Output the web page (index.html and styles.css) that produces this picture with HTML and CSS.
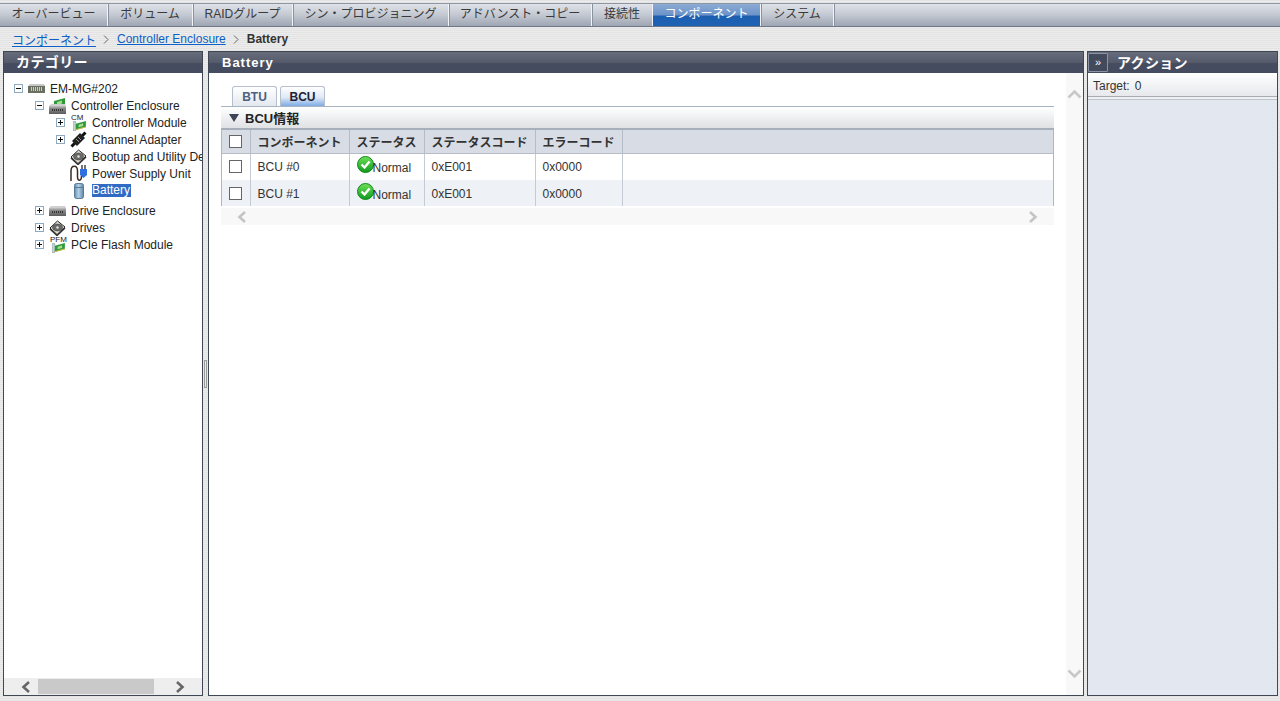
FILE: index.html
```html
<!DOCTYPE html>
<html lang="ja">
<head>
<meta charset="utf-8">
<title>Battery</title>
<link rel="stylesheet" href="styles.css">
</head>
<body>
<svg class="defs" width="0" height="0" aria-hidden="true">
  <defs>
    <linearGradient id="g-green" x1="0" y1="0" x2="0" y2="1"><stop offset="0" stop-color="#6fe05a"/><stop offset="1" stop-color="#0c9a1c"/></linearGradient>
    <linearGradient id="g-bat" x1="0" y1="0" x2="1" y2="0"><stop offset="0" stop-color="#5d8fb5"/><stop offset=".45" stop-color="#b4d0e4"/><stop offset="1" stop-color="#5d86a8"/></linearGradient>
    <linearGradient id="g-box" x1="0" y1="0" x2="0" y2="1"><stop offset="0" stop-color="#c4c4c4"/><stop offset=".3" stop-color="#8a8a8a"/><stop offset="1" stop-color="#5c5c5c"/></linearGradient>
    <symbol id="i-plus" viewBox="0 0 9 9"><rect x=".5" y=".5" width="8" height="8" fill="#fff" stroke="#8fa9c0"/><path d="M2 4.500h5M4.500 2v5" stroke="#111"/></symbol>
    <symbol id="i-minus" viewBox="0 0 9 9"><rect x=".5" y=".5" width="8" height="8" fill="#fff" stroke="#8fa9c0"/><path d="M2 4.500h5" stroke="#111"/></symbol>
    <symbol id="i-board" viewBox="0 0 14 11"><rect x="0" y="0" width="3" height="11" fill="#c5d2d2" stroke="#8a9a9a" stroke-width=".5"/><path d="M3 3l11-3v7L3 10z" fill="#2e9a3c"/><path d="M6 4l5-1.500v3L6 7z" fill="#a5dc8e"/><path d="M3 9.500l11-3" stroke="#e0c040"/></symbol>
    <symbol id="i-disk" viewBox="0 0 17 16"><path d="M1 9l7 6.500L16 8" fill="none" stroke="#333" stroke-width="1.500"/><path d="M8.500 1L16 7l-8 7.500L1 8z" fill="#e6e4d6" stroke="#222"/><ellipse cx="8.500" cy="7.500" rx="5" ry="3.500" fill="#6a6a6a" stroke="#222" stroke-width=".5"/><circle cx="8.500" cy="7.500" r="1.200" fill="#e4e4e4"/></symbol>
    <symbol id="i-enc" viewBox="0 0 17 10"><path d="M2 0h14l1 2H0z" fill="#cfcfcf"/><rect x="0" y="2" width="17" height="8" fill="url(#g-box)"/><path d="M3 6h11" stroke="#333" stroke-width="2" stroke-dasharray="1 1"/></symbol>
  </defs>
</svg>

<nav class="menu">
  <a class="menu-item m1">オーバービュー</a>
  <a class="menu-item m2">ボリューム</a>
  <a class="menu-item m3">RAIDグループ</a>
  <a class="menu-item m4">シン・プロビジョニング</a>
  <a class="menu-item m5">アドバンスト・コピー</a>
  <a class="menu-item m6">接続性</a>
  <a class="menu-item m7 active">コンポーネント</a>
  <a class="menu-item m8">システム</a>
</nav>

<div class="crumbs">
  <a href="#">コンポーネント</a>
  <svg class="crumb-sep" width="6" height="9" viewBox="0 0 6 9"><path d="M1 .5l4 4-4 4" fill="none" stroke="#666"/></svg>
  <a href="#">Controller Enclosure</a>
  <svg class="crumb-sep" width="6" height="9" viewBox="0 0 6 9"><path d="M1 .5l4 4-4 4" fill="none" stroke="#666"/></svg>
  <b>Battery</b>
</div>

<div class="workspace">
  <aside class="panel left">
    <h2 class="panel-title">カテゴリー</h2>
    <div class="tree">
      <div class="node l0"><svg class="tog"><use href="#i-minus"/></svg><span class="ico">
        <svg width="17" height="9"><path d="M2 0h14l1 2H0z" fill="#c8c8c8"/><rect y="2" width="17" height="7" fill="#6a7060"/><path d="M3 5h11" stroke="#b8e090" stroke-width="4" stroke-dasharray="1 1"/></svg></span><span class="lbl">EM-MG#202</span></div>
      <div class="node l1"><svg class="tog"><use href="#i-minus"/></svg><span class="ico">
        <svg width="17" height="16"><path d="M5 3l11-3v7L5 10z" fill="#2e9a3c"/><path d="M8 4l5-1.500v3L8 7z" fill="#a5dc8e"/><use href="#i-enc" y="6" width="17" height="10"/></svg></span><span class="lbl">Controller Enclosure</span></div>
      <div class="node l2"><svg class="tog"><use href="#i-plus"/></svg><span class="ico ico-tall">
        <svg class="sub" width="13" height="10"><use href="#i-board" width="13" height="10"/></svg><span class="tiny">CM</span></span><span class="lbl">Controller Module</span></div>
      <div class="node l2"><svg class="tog"><use href="#i-plus"/></svg><span class="ico">
        <svg width="17" height="17" viewBox="0 0 17 17"><path d="M1.500 15.500L5 12M12 5l3.500-3.500" stroke="#111" stroke-width="3"/><path d="M4.500 12.500L12.500 4.500" stroke="#222" stroke-width="7"/><path d="M6 8l3 3M8 6l3 3" stroke="#999"/></svg></span><span class="lbl">Channel Adapter</span></div>
      <div class="node l2 noTog"><span class="ico"><svg width="17" height="16"><use href="#i-disk" width="17" height="16"/></svg></span><span class="lbl">Bootup and Utility Device</span></div>
      <div class="node l2 noTog"><span class="ico">
        <svg width="18" height="17" viewBox="0 0 18 17"><path d="M1 16V6c0-6.500 6.500-6.500 6.500 0v6c0 4.500 4 4.500 4-1" fill="none" stroke="#3a2a22" stroke-width="1.500"/><path d="M10 4h7v6l-3.500 3L10 10z" fill="#2f6fe0"/><path d="M12 0v4M15 0v4" stroke="#444" stroke-width="1.500"/></svg></span><span class="lbl">Power Supply Unit</span></div>
      <div class="node l2 noTog"><span class="ico">
        <svg width="12" height="16" viewBox="0 0 12 16"><rect x="1.500" y=".5" width="9" height="15" rx="2" fill="url(#g-bat)" stroke="#5b7a94"/><path d="M1.500 4.500h9" stroke="#5b7a94"/></svg></span><span class="lbl sel">Battery</span></div>
      <div class="node l1 after-gap"><svg class="tog"><use href="#i-plus"/></svg><span class="ico">
        <svg width="17" height="10"><use href="#i-enc" width="17" height="10"/></svg></span><span class="lbl">Drive Enclosure</span></div>
      <div class="node l1"><svg class="tog"><use href="#i-plus"/></svg><span class="ico"><svg width="17" height="16"><use href="#i-disk" width="17" height="16"/></svg></span><span class="lbl">Drives</span></div>
      <div class="node l1"><svg class="tog"><use href="#i-plus"/></svg><span class="ico ico-tall">
        <svg class="sub" width="13" height="10"><use href="#i-board" width="13" height="10"/></svg><span class="tiny">PFM</span></span><span class="lbl">PCIe Flash Module</span></div>
    </div>
    <div class="hscroll">
      <svg width="12" height="12" viewBox="0 0 12 12"><path d="M9 1L3.500 6 9 11" fill="none" stroke="#666" stroke-width="2.600"/></svg>
      <div class="thumb"></div>
      <svg class="next" width="12" height="12" viewBox="0 0 12 12"><path d="M3 1l5.500 5L3 11" fill="none" stroke="#666" stroke-width="2.600"/></svg>
    </div>
  </aside>

  <div class="splitter"><span class="grip"></span></div>

  <main class="panel center">
    <h2 class="panel-title en">Battery</h2>
    <div class="center-body">
      <div class="content">
        <div class="tabs">
          <span class="tab">BTU</span>
          <span class="tab on">BCU</span>
        </div>
        <div class="section"><span class="tri"></span>BCU情報</div>
        <div class="table-wrap">
          <table>
            <thead>
              <tr>
                <th class="c0"><span class="check"></span></th>
                <th class="c1">コンポーネント</th>
                <th class="c2">ステータス</th>
                <th class="c3">ステータスコード</th>
                <th class="c4">エラーコード</th>
                <th></th>
              </tr>
            </thead>
            <tbody>
              <tr>
                <td class="c0"><span class="check"></span></td>
                <td>BCU #0</td>
                <td class="st"><svg class="ok" width="17" height="17" viewBox="0 0 17 17"><circle cx="8.500" cy="8.500" r="8" fill="url(#g-green)" stroke="#0d8a18"/><path d="M4.500 8.500l3 3 5-6" fill="none" stroke="#fff" stroke-width="2.400"/></svg>Normal</td>
                <td>0xE001</td>
                <td>0x0000</td>
                <td></td>
              </tr>
              <tr class="alt">
                <td class="c0"><span class="check"></span></td>
                <td>BCU #1</td>
                <td class="st"><svg class="ok" width="17" height="17" viewBox="0 0 17 17"><circle cx="8.500" cy="8.500" r="8" fill="url(#g-green)" stroke="#0d8a18"/><path d="M4.500 8.500l3 3 5-6" fill="none" stroke="#fff" stroke-width="2.400"/></svg>Normal</td>
                <td>0xE001</td>
                <td>0x0000</td>
                <td></td>
              </tr>
            </tbody>
          </table>
        </div>
        <div class="table-scroll">
          <svg width="12" height="12" viewBox="0 0 12 12"><path d="M9 1L3.500 6 9 11" fill="none" stroke="#c4c4c4" stroke-width="2.600"/></svg>
          <svg width="12" height="12" viewBox="0 0 12 12"><path d="M3 1l5.500 5L3 11" fill="none" stroke="#c4c4c4" stroke-width="2.600"/></svg>
        </div>
      </div>
      <div class="vscroll">
        <svg width="15" height="12" viewBox="0 0 15 12"><path d="M1.500 9.500l6-6 6 6" fill="none" stroke="#c8c8c8" stroke-width="2.600"/></svg>
        <svg width="15" height="12" viewBox="0 0 15 12"><path d="M1.500 2.500l6 6 6-6" fill="none" stroke="#c8c8c8" stroke-width="2.600"/></svg>
      </div>
    </div>
  </main>

  <aside class="panel right">
    <h2 class="panel-title action"><span class="collapse">»</span>アクション</h2>
    <div class="target"><span>Target:</span><span>0</span></div>
    <div class="rule"></div>
    <div class="right-body"></div>
  </aside>
</div>
</body>
</html>
```

FILE: styles.css
```css
html, body { margin: 0; height: 100%; }
body {
  width: 1280px;
  height: 701px;
  overflow: hidden;
  display: flex;
  flex-direction: column;
  font-family: "Liberation Sans", "Noto Sans CJK JP", sans-serif;
  font-size: 12px;
  color: #333;
  background: repeating-linear-gradient(to bottom, #e3e3e3 0, #e3e3e3 1px, #ececec 1px, #ececec 2px);
}
.defs { position: absolute; }

/* top menu */
.menu {
  height: 22px;
  margin-top: 3px;
  display: flex;
  flex: none;
  border-top: 1px solid #8f96a3;
  border-bottom: 1px solid #6f7787;
  background: linear-gradient(to bottom, #dfe2e8 0, #c3c8d1 50%, #9ea6b3 100%);
}
.menu-item {
  box-sizing: border-box;
  display: block;
  text-align: center;
  line-height: 20px;
  font-size: 12px;
  color: #3a3a3a;
  border-right: 1px solid #f2f4f7;
  box-shadow: 1px 0 0 #8a92a0;
}
.m1 { width: 108px; }
.m2 { width: 85px; }
.m3 { width: 100px; }
.m4 { width: 156px; }
.m5 { width: 143px; }
.m6 { width: 61px; }
.m7 { width: 108px; }
.m8 { width: 73px; }
.menu-item.active {
  color: #fff;
  background: linear-gradient(to bottom, #8cabd4 0, #6c93c8 50%, #1d5eaf 55%, #1f62b4 100%);
}

/* breadcrumb */
.crumbs {
  height: 24px;
  flex: none;
  display: flex;
  align-items: center;
  padding-left: 12px;
}
.crumbs a { color: #0c5fc4; text-decoration: underline; }
.crumbs b { color: #333; }
.crumb-sep { margin: 1px 8px 0 7px; }

/* panels */
.workspace {
  flex: none;
  height: 645px;
  display: flex;
  padding-left: 3px;
}
.panel {
  box-sizing: border-box;
  height: 645px;
  border: 1px solid #3f4654;
  background: #fff;
  display: flex;
  flex-direction: column;
}
.left { width: 200px; }
.center { width: 876px; }
.right { width: 191px; margin-left: 3px; }
.panel-title {
  margin: 0;
  flex: none;
  height: 21px;
  box-sizing: border-box;
  padding-left: 12px;
  line-height: 20px;
  font-size: 14px;
  font-weight: bold;
  letter-spacing: .4px;
  color: #fff;
  background: linear-gradient(to bottom, #666c7a 0, #555b6b 50%, #454c60 55%, #454c60 100%);
}
.panel-title.en { padding-left: 13px; font-size: 13px; letter-spacing: 1px; line-height: 21px; }
.panel-title.action {
  padding-left: 0;
  display: flex;
  align-items: center;
  letter-spacing: .3px;
}
.collapse {
  box-sizing: border-box;
  width: 20px;
  height: 19px;
  margin-right: 9px;
  border: 1px solid #8b93a6;
  border-radius: 1px;
  font-size: 11px;
  font-weight: normal;
  letter-spacing: 0;
  text-align: center;
  line-height: 16px;
  background: #434a5c;
}

/* splitter */
.splitter {
  width: 5px;
  flex: none;
  display: flex;
  align-items: center;
  justify-content: center;
}
.grip {
  width: 3px;
  height: 28px;
  box-sizing: border-box;
  border: 1px solid #9a9a9a;
  background: #e8e8e8;
}

/* tree */
.tree {
  flex: 1;
  overflow: hidden;
  padding-top: 7px;
  color: #222;
}
.node {
  height: 17px;
  display: flex;
  align-items: center;
  white-space: nowrap;
}
.l0 { padding-left: 10px; }
.l1 { padding-left: 31px; }
.l2 { padding-left: 52px; }
.after-gap { margin-top: 3px; }
.tog { width: 9px; height: 9px; flex: none; margin-right: 3px; }
.noTog { padding-left: 64px; }
.ico {
  width: 21px;
  height: 17px;
  flex: none;
  display: flex;
  align-items: center;
  justify-content: center;
  position: relative;
}
.ico svg { display: block; flex: none; }
.ico-tall .sub { margin: 3px 0 -3px 1px; }
.tiny {
  position: absolute;
  top: -1px;
  left: 3px;
  font-size: 8px;
  line-height: 9px;
  color: #222;
}
.lbl { margin-left: 3px; padding: 0 1px 0 0; }
.sel { background: #316ac5; color: #fff; line-height: 13px; }

.hscroll {
  flex: none;
  height: 17px;
  background: #eeeeee;
  display: flex;
  align-items: center;
  padding: 0 16px;
}
.thumb {
  flex: none;
  width: 116px;
  height: 15px;
  margin: 0 0 0 6px;
  background: #c9c9c9;
}
.next { margin-left: 20px; flex: none; }

/* center */
.center-body { flex: 1; display: flex; min-height: 0; }
.content { flex: 1; padding: 13px 12px 0 12px; min-width: 0; }
.vscroll {
  width: 17px;
  flex: none;
  background: #f8f8f8;
  display: flex;
  flex-direction: column;
  justify-content: space-between;
  align-items: center;
  padding: 15px 0;
  box-sizing: border-box;
}
.tabs {
  height: 20px;
  display: flex;
  gap: 3px;
  padding-left: 11px;
  border-bottom: 1px solid #a9b4c2;
}
.tab {
  box-sizing: border-box;
  width: 45px;
  height: 20px;
  border: 1px solid #b6c0cc;
  border-bottom: none;
  border-radius: 3px 3px 0 0;
  text-align: center;
  line-height: 20px;
  font-weight: bold;
  color: #4f5f80;
  background: linear-gradient(to bottom, #fff, #e3e8ef);
}
.tab.on {
  color: #223;
  background: linear-gradient(to bottom, #fff 0, #dfe9f6 55%, #7fabe4 100%);
}
.section {
  height: 21px;
  box-sizing: border-box;
  padding-left: 8px;
  display: flex;
  align-items: center;
  font-size: 13px;
  font-weight: bold;
  color: #222;
  background: linear-gradient(to bottom, #fff, #dfe1e4);
}
.tri {
  width: 0;
  height: 0;
  margin-right: 6px;
  border-left: 5px solid transparent;
  border-right: 5px solid transparent;
  border-top: 8px solid #3d4455;
}

/* table */
.table-wrap {
  border-left: 1px solid #aeb6c2;
  border-right: 1px solid #aeb6c2;
  border-top: 2px solid #a7afbb;
}
table {
  width: 100%;
  border-collapse: collapse;
  table-layout: fixed;
}
th {
  height: 23px;
  padding: 0 0 0 7px;
  box-sizing: border-box;
  text-align: left;
  font-size: 12px;
  font-weight: bold;
  color: #333;
  background: #d8dde5;
  border-right: 1px solid #b5bcc7;
  border-bottom: 1px solid #b5bcc7;
  white-space: nowrap;
}
th:last-child { border-right: none; }
th.c0, td.c0 { width: 28px; padding: 0; text-align: center; }
th.c1 { width: 99px; }
th.c2 { width: 75px; }
th.c3 { width: 111px; }
th.c4 { width: 87px; }
td {
  height: 27px;
  padding: 0 0 0 7px;
  box-sizing: border-box;
  color: #333;
  border-right: 1px solid #c5cbd4;
  background: #fff;
}
tr.alt td { height: 26px; padding-top: 1px; background: #eef1f5; }
tr.alt td.c0 { padding-top: 0; }
td:last-child { border-right: none; }
.check {
  display: block;
  box-sizing: border-box;
  width: 13px;
  height: 13px;
  margin: 0 auto;
  border: 1px solid #666;
  background: #fff;
}
.st { white-space: nowrap; padding-bottom: 2px; }
.ok { vertical-align: -1px; margin-right: -1px; }
.table-scroll {
  margin-top: 2px;
  height: 17px;
  background: #f8f8f8;
  display: flex;
  align-items: center;
  justify-content: space-between;
  padding: 0 15px;
}

/* right */
.target {
  flex: none;
  height: 24px;
  box-sizing: border-box;
  padding: 2px 0 0 5px;
  display: flex;
  gap: 5px;
  align-items: center;
  color: #333;
  background: linear-gradient(to bottom, #fff, #e6e8ec);
  border-bottom: 1px solid #a8adb3;
}
.rule {
  flex: none;
  height: 3px;
  box-sizing: border-box;
  background: #eef0f3;
  border-bottom: 1px solid #bfc4c8;
}
.right-body { flex: 1; background: #e3e7f0; }
```
